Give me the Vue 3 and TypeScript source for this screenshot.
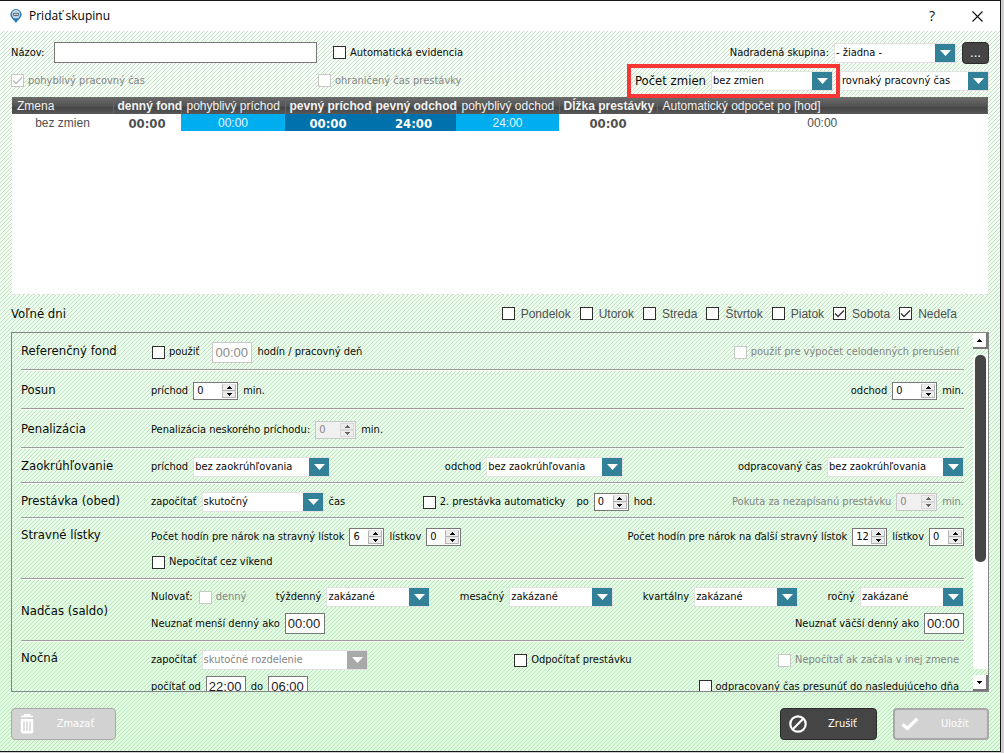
<script setup lang="ts">
import { defineComponent, h, reactive, ref } from 'vue'

const SpinBox = defineComponent({
  props: {
    id: { type: String, required: true },
    start: { type: Number, default: 0 },
    disabled: { type: Boolean, default: false },
  },
  setup(props) {
    const value = ref(props.start)
    const arrow = (d: string) =>
      h('svg', { viewBox: '0 0 5 3', width: 5, height: 3, 'aria-hidden': 'true' }, [h('path', { d, fill: 'currentColor' })])
    const step = (by: number) => () => {
      value.value = Math.max(0, value.value + by)
    }
    return () =>
      h('span', { class: ['spin', { off: props.disabled }] }, [
        h('input', {
          id: props.id,
          type: 'number',
          min: 0,
          value: value.value,
          disabled: props.disabled,
          onInput: (e: Event) => {
            value.value = Number((e.target as HTMLInputElement).value)
          },
        }),
        h('span', { class: 'steps' }, [
          h('button', { type: 'button', tabindex: -1, disabled: props.disabled, 'aria-label': 'Zvýšiť', onClick: step(1) }, [arrow('M2 0h1v1h1v1h1v1H0V2h1V1h1z')]),
          h('button', { type: 'button', tabindex: -1, disabled: props.disabled, 'aria-label': 'Znížiť', onClick: step(-1) }, [arrow('M0 0h5v1H4v1H3v1H2V2H1V1H0z')]),
        ]),
      ])
  },
})

const name = ref('')
const days = reactive([
  { label: 'Pondelok', free: false },
  { label: 'Utorok', free: false },
  { label: 'Streda', free: false },
  { label: 'Štvrtok', free: false },
  { label: 'Piatok', free: false },
  { label: 'Sobota', free: true },
  { label: 'Nedeľa', free: true },
])
const columns = [
  { key: 'shift', title: 'Zmena', value: 'bez zmien' },
  { key: 'fund', title: 'denný fond', value: '00:00', bold: true },
  { key: 'flex-in', title: 'pohyblivý príchod', value: '00:00' },
  { key: 'fixed-in', title: 'pevný príchod', value: '00:00', bold: true },
  { key: 'fixed-out', title: 'pevný odchod', value: '24:00', bold: true },
  { key: 'flex-out', title: 'pohyblivý odchod', value: '24:00' },
  { key: 'break', title: 'Dĺžka prestávky', value: '00:00', bold: true },
  { key: 'auto', title: 'Automatický odpočet po [hod]', value: '00:00' },
]
</script>

<template>
  <div class="desktop">
    <main class="dialog">
      <header class="titlebar">
        <svg class="pin" viewBox="0 0 12 14" width="12" height="14" aria-hidden="true">
          <path d="M6 0a5.6 5.6 0 0 1 5.6 5.6C11.600 9 8 11 6 14C4 11 .4 9 .4 5.600A5.600 5.600 0 0 1 6 0z" fill="#2478b5" />
          <circle cx="6" cy="5.300" r="4.200" fill="#c9d9e4" />
          <ellipse cx="6" cy="5.300" rx="3.300" ry="1.900" fill="#5d6f7c" />
          <path d="M4 5.300h4" stroke="#e8eef2" stroke-width="1" />
        </svg>
        <h1>Pridať skupinu</h1>
        <button type="button" class="sys" aria-label="Pomocník">?</button>
        <button type="button" class="sys close" aria-label="Zavrieť">
          <svg viewBox="0 0 11 11" width="11" height="11" aria-hidden="true"><path d="M.5.5l10 10M10.500.5l-10 10" stroke="#111" stroke-width="1.100" /></svg>
        </button>
      </header>

      <form class="body" @submit.prevent>
        <div class="top">
          <div class="line first">
            <label for="name">Názov:</label>
            <input id="name" v-model="name" type="text" class="name" />
            <label class="check auto"><input type="checkbox" />Automatická evidencia</label>
            <span class="pair end">
              <label for="parent">Nadradená skupina:</label>
              <select id="parent" class="w122"><option>- žiadna -</option></select>
            </span>
            <button type="button" class="dots">...</button>
          </div>
          <div class="line second">
            <label class="check dim flexible"><input type="checkbox" checked disabled />pohyblivý pracovný čas</label>
            <label class="check dim"><input type="checkbox" disabled />ohraničený čas prestávky</label>
            <span class="pair end count">
              <label for="count" class="big">Počet zmien</label>
              <select id="count" class="w122"><option>bez zmien</option></select>
            </span>
            <select class="w149" aria-label="Pracovný čas"><option>rovnaký pracovný čas</option></select>
          </div>
        </div>

        <div class="grid">
          <table>
            <colgroup><col v-for="c in columns" :key="c.key" :class="'c-' + c.key" /></colgroup>
            <thead>
              <tr><th v-for="c in columns" :key="c.key" scope="col" :class="{ bold: c.bold }">{{ c.title }}</th></tr>
            </thead>
            <tbody>
              <tr><td v-for="c in columns" :key="c.key" :class="['d-' + c.key, { bold: c.bold }]">{{ c.value }}</td></tr>
            </tbody>
          </table>
        </div>

        <div class="days" role="group" aria-labelledby="days-title">
          <span id="days-title" class="big grow">Voľné dni</span>
          <label v-for="d in days" :key="d.label" class="check day"><input v-model="d.free" type="checkbox" />{{ d.label }}</label>
        </div>

        <div class="panel">
          <div class="sections">
            <section class="s36">
              <h2>Referenčný fond</h2>
              <div class="row">
                <span class="pair">
                  <label class="check use"><input type="checkbox" />použiť</label>
                  <input id="hours" type="text" class="time" value="00:00" disabled />
                  <label for="hours">hodín / pracovný deň</label>
                </span>
                <label class="check dim inset"><input type="checkbox" disabled />použiť pre výpočet celodenných prerušení</label>
              </div>
            </section>
            <section class="s39">
              <h2>Posun</h2>
              <div class="row">
                <span class="pair"><label for="sin">príchod</label><SpinBox id="sin" class="w45" /><span>min.</span></span>
                <span class="pair"><label for="sout">odchod</label><SpinBox id="sout" class="w45" /><span>min.</span></span>
              </div>
            </section>
            <section class="s39">
              <h2>Penalizácia</h2>
              <div class="row">
                <span class="pair"><label for="pen">Penalizácia neskorého príchodu:</label><SpinBox id="pen" class="w41" disabled /><span>min.</span></span>
              </div>
            </section>
            <section class="s35">
              <h2>Zaokrúhľovanie</h2>
              <div class="row">
                <span class="pair"><label for="rin">príchod</label><select id="rin" class="w137"><option>bez zaokrúhľovania</option></select></span>
                <span class="pair"><label for="rout">odchod</label><select id="rout" class="w137"><option>bez zaokrúhľovania</option></select></span>
                <span class="pair"><label for="rwork">odpracovaný čas</label><select id="rwork" class="w137"><option>bez zaokrúhľovania</option></select></span>
              </div>
            </section>
            <section class="s35">
              <h2>Prestávka (obed)</h2>
              <div class="row">
                <span class="pair"><label for="brk">započítať</label><select id="brk" class="w122"><option>skutočný</option></select><span>čas</span></span>
                <span class="pair">
                  <label class="check"><input type="checkbox" />2. prestávka automaticky</label>
                  <label for="after" class="after">po</label><SpinBox id="after" class="w35" /><span>hod.</span>
                </span>
                <span class="pair dim"><label for="fine">Pokuta za nezapísanú prestávku</label><SpinBox id="fine" class="w41" disabled /><span>min.</span></span>
              </div>
            </section>
            <section class="s61">
              <h2>Stravné lístky</h2>
              <div class="rows">
                <div class="row">
                  <span class="pair"><label for="m1">Počet hodín pre nárok na stravný lístok</label><SpinBox id="m1" class="w35" :start="6" /><label for="m2">lístkov</label><SpinBox id="m2" class="w35" /></span>
                  <span class="pair"><label for="m3">Počet hodín pre nárok na ďalší stravný lístok</label><SpinBox id="m3" class="w35" :start="12" /><label for="m4">lístkov</label><SpinBox id="m4" class="w35" /></span>
                </div>
                <div class="row"><label class="check"><input type="checkbox" />Nepočítať cez víkend</label></div>
              </div>
            </section>
            <section class="s62">
              <h2>Nadčas (saldo)</h2>
              <div class="rows">
                <div class="row">
                  <span class="pair"><span>Nulovať:</span><label class="check dim"><input type="checkbox" disabled />denný</label></span>
                  <span class="pair"><label for="ow">týždenný</label><select id="ow" class="w104"><option>zakázané</option></select></span>
                  <span class="pair"><label for="om">mesačný</label><select id="om" class="w104"><option>zakázané</option></select></span>
                  <span class="pair"><label for="oq">kvartálny</label><select id="oq" class="w104"><option>zakázané</option></select></span>
                  <span class="pair"><label for="oy">ročný</label><select id="oy" class="w104"><option>zakázané</option></select></span>
                </div>
                <div class="row">
                  <span class="pair"><label for="less">Neuznať menší denný ako</label><input id="less" type="text" class="time" value="00:00" /></span>
                  <span class="pair"><label for="more">Neuznať väčší denný ako</label><input id="more" type="text" class="time" value="00:00" /></span>
                </div>
              </div>
            </section>
            <section class="s-night">
              <h2>Nočná</h2>
              <div class="rows">
                <div class="row">
                  <span class="pair"><label for="night">započítať</label><select id="night" class="w166" disabled><option>skutočné rozdelenie</option></select></span>
                  <label class="check"><input type="checkbox" />Odpočítať prestávku</label>
                  <label class="check dim inset"><input type="checkbox" disabled />Nepočítať ak začala v inej zmene</label>
                </div>
                <div class="row">
                  <span class="pair"><label for="from">počítať od</label><input id="from" type="text" class="time" value="22:00" /><label for="to">do</label><input id="to" type="text" class="time" value="06:00" /></span>
                  <label class="check inset"><input type="checkbox" />odpracovaný čas presunúť do nasledujúceho dňa</label>
                </div>
              </div>
            </section>
          </div>
          <div class="scroll">
            <button type="button" aria-label="Nahor"><svg viewBox="0 0 5 3" width="5" height="3" aria-hidden="true"><path d="M2 0h1v1h1v1h1v1H0V2h1V1h1z" /></svg></button>
            <div class="track"><div class="thumb"></div></div>
            <button type="button" aria-label="Nadol"><svg viewBox="0 0 5 3" width="5" height="3" aria-hidden="true"><path d="M0 0h5v1H4v1H3v1H2V2H1V1H0z" /></svg></button>
          </div>
        </div>

        <footer class="actions">
          <button type="button" class="act delete" disabled>
            <svg viewBox="0 0 14 20" width="14" height="20" aria-hidden="true">
              <path d="M1 2.500h12M4.500 2V.8h5V2" fill="none" stroke="#fff" stroke-width="1.600" />
              <path d="M.8 5h12.400v12.500q0 2-2 2H2.800q-2 0-2-2z" fill="#fff" />
              <path d="M4 7.500v9.500M7 7.500v9.500M10 7.500v9.500" stroke="#d2d2d2" stroke-width="1.400" />
            </svg>
            <span>Zmazať</span>
          </button>
          <button type="button" class="act cancel">
            <svg viewBox="0 0 18 18" width="18" height="18" aria-hidden="true"><circle cx="9" cy="9" r="7.700" fill="none" stroke="#fff" stroke-width="2.200" /><path d="M14.200 3.800L3.800 14.200" stroke="#fff" stroke-width="2.200" /></svg>
            <span>Zrušiť</span>
          </button>
          <button type="submit" class="act save" disabled>
            <svg viewBox="0 0 18 14" width="18" height="14" aria-hidden="true"><path d="M1.500 7.200l4.800 4.300L16.300 1.800" fill="none" stroke="#fff" stroke-width="3.400" /></svg>
            <span>Uložit</span>
          </button>
        </footer>
      </form>
    </main>
  </div>
</template>

<style>
body {
  margin: 0;
}
</style>

<style scoped>
.desktop {
  box-sizing: border-box;
  min-height: 100vh;
  padding: 0 3px 1px 0;
  background: #d0cece;
  display: flex;
  font: 11px/14px Tahoma, "DejaVu Sans Condensed", "Noto Sans", sans-serif;
  color: #0a0a0a;
}
.desktop *,
.desktop :deep(*) {
  box-sizing: border-box;
}
.dialog {
  flex: 1;
  min-width: 0;
  display: flex;
  flex-direction: column;
  border: solid #151515;
  border-width: 1px 1px 1px 0;
}
.titlebar {
  height: 30px;
  display: flex;
  align-items: center;
  background: #fff;
  padding: 0 8px 0 10px;
}
.titlebar h1 {
  flex: 1;
  margin: 0 0 0 7px;
  font: 12px/16px "Segoe UI", "Open Sans", "Noto Sans", sans-serif;
  color: #000;
}
.sys {
  width: 30px;
  height: 28px;
  padding: 0;
  margin-left: 15px;
  border: 0;
  background: none;
  font: 14px/16px "Open Sans", sans-serif;
  color: #111;
  display: grid;
  place-items: center;
}
.body {
  flex: 1;
  display: flex;
  flex-direction: column;
  padding: 11px 11px 11px;
  background:
    url("data:image/svg+xml,%3Csvg xmlns='http://www.w3.org/2000/svg' width='4' height='4' shape-rendering='crispEdges'%3E%3Cpath d='M3 0h1v1h-1zM2 1h1v1h-1zM1 2h1v1h-1zM0 3h1v1h-1z' fill='%23b8d8bc' fill-opacity='.8'/%3E%3C/svg%3E"),
    linear-gradient(#f8fef8, #ddfedd);
}
.line {
  display: flex;
  align-items: center;
}
.first {
  height: 21px;
}
.second {
  height: 21px;
  margin-top: 7px;
}
.name {
  width: 263px;
  height: 21px;
  margin-left: 9px;
  border: 1px solid #777;
  padding: 0 4px;
  background: #fff;
  font: inherit;
}
.first > label:first-child {
  width: 34px;
  white-space: nowrap;
}
.auto {
  margin-left: 16px;
}
.end {
  margin-left: auto;
}
.flexible {
  width: 307px;
}
.big {
  font-size: 13px;
  line-height: 16px;
}
.dots {
  width: 27px;
  height: 22px;
  margin-left: 6px;
  padding: 0;
  border: 1px solid #2b2b2b;
  border-radius: 4px;
  background: #454545;
  color: #fff;
  font: inherit;
  font-size: 13px;
}
.count {
  position: relative;
  margin-right: 7px;
}
.count::after {
  content: "";
  position: absolute;
  inset: -7px -7px -7px -8px;
  border: 4px solid #f93636;
  pointer-events: none;
}
.pair {
  display: flex;
  align-items: center;
  gap: 5px;
  white-space: nowrap;
}
.check {
  display: flex;
  align-items: center;
  gap: 4px;
  white-space: nowrap;
}
.dim {
  color: #858585;
}
.check input {
  appearance: none;
  flex: none;
  width: 13px;
  height: 13px;
  margin: 0;
  border: 1px solid #2e2e2e;
  background: #fff no-repeat center / 11px 11px;
}
.sections .check input {
  margin-left: 1px;
}
.check input:disabled {
  border-color: #c8c8c8;
}
.check input:checked {
  background-image: url("data:image/svg+xml,%3Csvg xmlns='http://www.w3.org/2000/svg' viewBox='0 0 11 11'%3E%3Cpath d='M1 5.500l3 3L10 2.500' fill='none' stroke='%23333' stroke-width='1.300'/%3E%3C/svg%3E");
}
.check input:checked:disabled {
  background-image: url("data:image/svg+xml,%3Csvg xmlns='http://www.w3.org/2000/svg' viewBox='0 0 11 11'%3E%3Cpath d='M1 5.500l3 3L10 2.500' fill='none' stroke='%23bbb' stroke-width='1.300'/%3E%3C/svg%3E");
}
select {
  appearance: none;
  height: 20px;
  margin: 0;
  padding: 0 20px 0 1px;
  border: 1px solid #e2e2e2;
  border-radius: 0;
  background:
    url("data:image/svg+xml,%3Csvg xmlns='http://www.w3.org/2000/svg' viewBox='0 0 20 18'%3E%3Cpath d='M0 0h20v18H0z' fill='%23338199'/%3E%3Cpath d='M5 6h11l-5.500 6z' fill='%23fff'/%3E%3C/svg%3E") right center / 20px 18px no-repeat,
    #fff;
  font: inherit;
  color: inherit;
}
select:disabled {
  opacity: 1;
  color: #858585;
  background:
    url("data:image/svg+xml,%3Csvg xmlns='http://www.w3.org/2000/svg' viewBox='0 0 20 18'%3E%3Cpath d='M0 0h20v18H0z' fill='%23a9a9a9'/%3E%3Cpath d='M5 6h11l-5.500 6z' fill='%23fff'/%3E%3C/svg%3E") right center / 20px 18px no-repeat,
    #fff;
}
.w104 { width: 104px; }
.w122 { width: 122px; }
.w137 { width: 137px; }
.w149 { width: 149px; }
.w166 { width: 166px; }
.w35 { width: 35px; }
.w41 { width: 41px; }
.w45 { width: 45px; }

.grid {
  height: 198px;
  margin: 6px 1px 0;
  background: #fff;
  border-bottom: 1px dashed #dcdcdc;
}
table {
  width: 100%;
  table-layout: fixed;
  border-collapse: collapse;
  font: 12px/15px "Liberation Sans", Arial, sans-serif;
}
.c-shift { width: 101px; }
.c-fund { width: 68px; }
.c-flex-in { width: 104px; }
.c-fixed-in { width: 86px; }
.c-fixed-out { width: 85px; }
.c-flex-out { width: 103px; }
.c-break { width: 98px; }
thead tr {
  height: 17px;
  background: linear-gradient(#6c6c6c, #505050 60%, #444 60%, #585858);
}
th {
  padding: 1px 0 0 5px;
  text-align: left;
  font-weight: 400;
  color: #f2f2f2;
  white-space: nowrap;
  border-right: 1px solid #666;
}
th.bold {
  padding-left: 4px;
}
tbody tr {
  height: 17px;
}
td {
  padding: 1px 0 0;
  text-align: center;
  color: #505050;
}
.bold {
  font-weight: 700;
}
td.bold {
  font: bold 13px/15px Tahoma, "DejaVu Sans Condensed", sans-serif;
}
.d-flex-in,
.d-flex-out {
  background: #00adee;
  color: #e6f7ff;
}
.d-fixed-in,
.d-fixed-out {
  background: #0071ab;
  color: #fff;
}

.days {
  display: flex;
  align-items: center;
  gap: 9px;
  height: 37px;
  padding-right: 32px;
}
.grow {
  flex: 1;
}
.day {
  gap: 6px;
  font: 12px/16px "Liberation Sans", Arial, sans-serif;
  color: #505050;
}

.panel {
  flex: 1 1 0;
  min-height: 359px;
  display: flex;
  gap: 9px;
  border: 1px solid #85858c;
  overflow: hidden;
}
.sections {
  flex: 1;
  min-width: 0;
  height: 0;
  padding-left: 9px;
}
section {
  display: flex;
  align-items: center;
  padding-top: 2px;
  border-bottom: 1px solid #9e9a9e;
  box-shadow: 0 1px #f6fff6;
}
section h2 {
  flex: none;
  width: 130px;
  margin: 0;
  font-size: 13px;
  line-height: 16px;
  font-weight: 400;
}
.row {
  display: flex;
  flex: 1;
  align-items: center;
  justify-content: space-between;
}
section > .row {
  padding-top: 2px;
}
.rows {
  flex: 1;
  display: flex;
  flex-direction: column;
}
.s36 { height: 37px; }
.s39 { height: 39px; }
.s35 { height: 35px; }
.s61 { height: 61px; }
.s62 { height: 62px; }
.s36 {
  padding-top: 0;
}
.s61,
.s-night {
  align-items: flex-start;
}
.s61 h2 {
  margin-top: 7px;
}
.s61 .rows {
  padding-top: 8px;
  gap: 9px;
}
.s62 .rows {
  gap: 6px;
}
.s-night {
  border: 0;
  box-shadow: none;
}
.s-night h2 {
  margin-top: 7px;
}
.s-night .rows {
  padding-top: 7px;
  gap: 6px;
}
.inset {
  margin-right: 5px;
}
.use {
  margin-right: 8px;
}
.after {
  margin-left: 6px;
}
.time {
  width: 40px;
  height: 21px;
  padding: 0 2px;
  border: 1px solid #777;
  background: #fff;
  color: #222;
  font: 13px/16px "Liberation Sans", Arial, sans-serif;
}
.time:disabled {
  border-color: #c8c8c8;
  color: #8a8a8a;
}
:deep(.spin) {
  display: flex;
  flex: none;
  height: 18px;
  padding: 1px;
  border: 1px solid #777;
  background: #fff;
}
:deep(.spin input) {
  flex: 1;
  width: 0;
  min-width: 0;
  margin: 0;
  padding: 0 0 0 2px;
  border: 0;
  background: none;
  font: inherit;
  color: inherit;
  appearance: textfield;
}
:deep(.spin input::-webkit-inner-spin-button) {
  appearance: none;
  display: none;
}
:deep(.steps) {
  width: 14px;
  display: flex;
  flex-direction: column;
}
:deep(.steps button) {
  flex: 1;
  min-height: 0;
  padding: 0;
  border: 1px solid #b4b4b4;
  border-top-color: #e4e4e4;
  background: #ececec;
  color: #111;
  display: grid;
  place-items: center;
  line-height: 0;
}
:deep(.spin.off) {
  border-color: #c8c8c8;
  background: #f0f0f0;
}
:deep(.spin.off input) {
  color: #858585;
}
:deep(.spin.off button) {
  border-color: #d8d8d8;
  color: #666;
}

.scroll {
  width: 15px;
  display: flex;
  flex-direction: column;
  gap: 6px;
}
.scroll button {
  height: 16px;
  padding: 0;
  border: solid #777;
  border-width: 0 2px 2px 0;
  background: #fff;
  display: grid;
  place-items: center;
  line-height: 0;
}
.track {
  flex: 1;
  padding: 0 2px;
  background: #fff;
}
.thumb {
  height: 66%;
  border-radius: 5px;
  background: #454545;
}
.actions {
  display: flex;
  gap: 16px;
  margin-top: 16px;
}
.act {
  display: flex;
  align-items: center;
  width: 97px;
  height: 32px;
  padding: 0 8px;
  border: 1px solid #2a2a2a;
  border-radius: 4px;
  background: #454545;
  color: #fff;
  font: inherit;
}
.act span {
  flex: 1;
  text-align: center;
  padding-left: 10px;
}
.act:disabled {
  border-color: #a8a8a8;
  background: #d2d2d2;
  color: #fff;
}
.delete {
  width: 105px;
  margin-right: auto;
}
.save {
  width: 96px;
  border-width: 2px;
  padding: 0 6px;
}
</style>
